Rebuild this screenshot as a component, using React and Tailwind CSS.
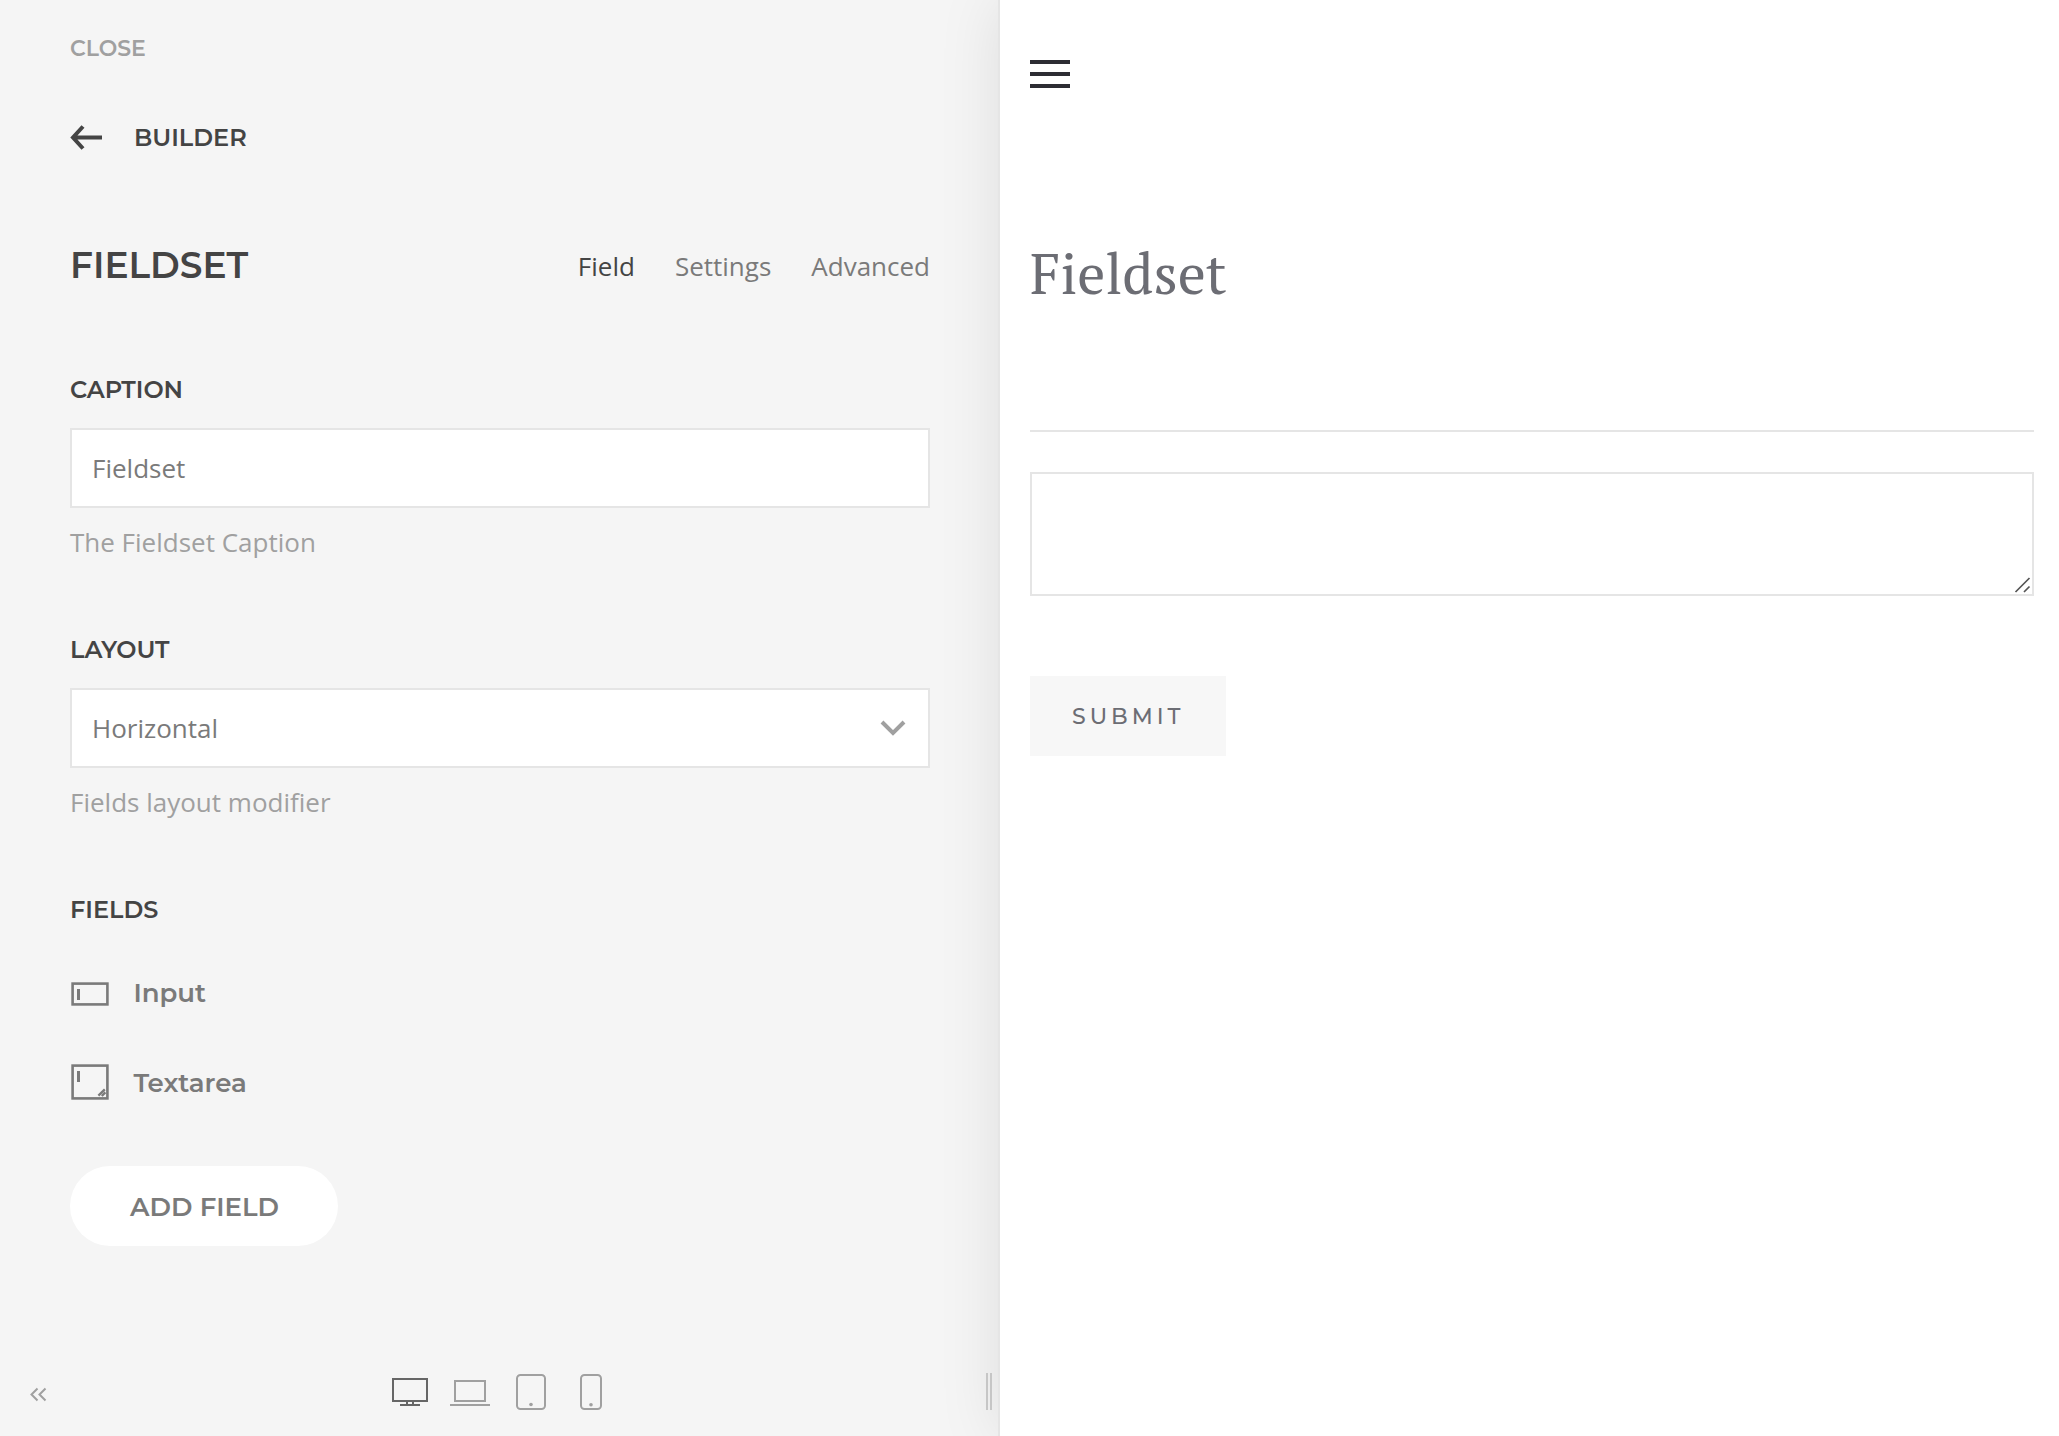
import React from "react";

const heading = "font-['Montserrat','Inter',sans-serif]";

function Label({ children }) {
  return (
    <div className="pt-px font-['Montserrat','Inter',sans-serif] text-[24px] leading-[34px] font-semibold text-[#444444]">
      {children}
    </div>
  );
}

function Hint({ children }) {
  return <p className="mt-4 text-[26px] leading-[36px] text-[#a0a0a0]">{children}</p>;
}

function InputIcon() {
  return (
    <svg width="40" height="40" viewBox="0 0 40 40" fill="none" stroke="#7a7a7a">
      <rect x="2.6" y="10.6" width="34.8" height="20.8" strokeWidth="2.6" />
      <path d="M8.5 16v11" strokeWidth="3" />
    </svg>
  );
}

function TextareaIcon() {
  return (
    <svg width="40" height="40" viewBox="0 0 40 40" fill="none" stroke="#7a7a7a">
      <rect x="2.6" y="2.6" width="34.8" height="32.8" strokeWidth="2.6" />
      <path d="M8.5 8v11" strokeWidth="3" />
      <path d="M28.4 32.6l6.4-6.2M31.8 33l3.6-3.6" strokeWidth="2.3" />
    </svg>
  );
}

function FieldRow({ icon, children }) {
  return (
    <div className="flex h-[90px] items-center gap-[23.4px]">
      {icon}
      <span className="font-['Montserrat','Inter',sans-serif] text-[26px] leading-[40px] font-semibold text-[#7a7a7a]">
        {children}
      </span>
    </div>
  );
}

function Devices() {
  return (
    <div className="flex h-9 items-end">
      <svg className="mr-[22px]" width="36" height="36" fill="none" stroke="#666666" strokeWidth="2">
        <path d="M1 5h34v22H1zM15 28v2M21 28v2M8 31h20" />
      </svg>
      <svg className="mr-[26px]" width="40" height="36" fill="none" stroke="#a0a0a0" strokeWidth="2">
        <path d="M5 7h30v20H5zM0 31h40" />
      </svg>
      <svg className="mr-[34px]" width="30" height="36" fill="none" stroke="#a0a0a0" strokeWidth="2">
        <rect x="1" y="1" width="28" height="34" rx="3.5" />
        <circle cx="15" cy="30.5" r="1.8" fill="#a0a0a0" stroke="none" />
      </svg>
      <svg width="22" height="36" fill="none" stroke="#a0a0a0" strokeWidth="2">
        <rect x="1" y="1" width="20" height="34" rx="3.5" />
        <circle cx="11" cy="30.8" r="1.8" fill="#a0a0a0" stroke="none" />
      </svg>
    </div>
  );
}

function Sidebar() {
  return (
    <aside className="flex h-full w-[1000px] shrink-0 flex-col bg-[#f5f5f5] pt-[33px]">
      <div className="flex flex-1 flex-col items-stretch px-[70px]">
        <div className={heading + " text-[22px] leading-[32px] font-semibold text-[#a0a0a0]"}>CLOSE</div>

        <div className="mt-[54px] flex h-9 items-center">
          <svg width="32" height="26" viewBox="0 0 32 26" fill="none" stroke="#444444" strokeWidth="4">
            <path d="M13 2.5L3 13.5l10 11M3 13.5h29" />
          </svg>
          <span className={heading + " ml-8 pt-0.5 text-[24px] leading-[36px] font-semibold text-[#444444]"}>
            BUILDER
          </span>
        </div>

        <div className="mt-[82px] flex h-14 items-center justify-between">
          <h1 className={heading + " text-[36px] leading-[44px] font-semibold text-[#444444]"}>FIELDSET</h1>
          <nav className="flex gap-10 pt-px text-[26px] leading-[38px] text-[#7a7a7a]">
            <span className="text-[#444444]">Field</span>
            <span>Settings</span>
            <span>Advanced</span>
          </nav>
        </div>

        <div className="mt-[79px]">
          <Label>CAPTION</Label>
          <div className="mt-[21px] flex h-20 items-center border-2 border-[#e5e5e5] bg-white px-5 text-[26px] text-[#7a7a7a]">
            Fieldset
          </div>
          <Hint>The Fieldset Caption</Hint>
        </div>

        <div className="mt-[72px]">
          <Label>LAYOUT</Label>
          <div className="mt-[21px] flex h-20 items-center justify-between border-2 border-[#e5e5e5] bg-white pr-[21px] pl-5 text-[26px] text-[#7a7a7a]">
            Horizontal
            <svg width="28" height="20" viewBox="0 0 28 20" fill="none" stroke="#a0a0a0" strokeWidth="4">
              <path d="M3 4l11 11L25 4" />
            </svg>
          </div>
          <Hint>Fields layout modifier</Hint>
        </div>

        <div className="mt-[72px]">
          <Label>FIELDS</Label>
          <div className="mt-[21px]">
            <FieldRow icon={<InputIcon />}>Input</FieldRow>
            <FieldRow icon={<TextareaIcon />}>Textarea</FieldRow>
          </div>
          <button className="mt-[38px] block h-20 w-[268px] rounded-full bg-white pt-px pl-px text-center font-['Montserrat','Inter',sans-serif] text-[26px] leading-[80px] font-semibold text-[#7a7a7a]">
            ADD FIELD
          </button>
        </div>
      </div>

      <div className="grid h-[62px] grid-cols-[1fr_auto_1fr] items-start pr-1.5">
        <svg className="mt-[13px] ml-[30px]" width="18" height="16" fill="none" stroke="#a0a0a0" strokeWidth="2">
          <path d="M7.5 1.5l-6 6 6 6M15.5 1.5l-6 6 6 6" />
        </svg>
        <Devices />
        <div className="relative z-10 -mt-px mr-0.5 flex h-[37px] w-1.5 justify-between justify-self-end">
          <i className="block w-0.5 bg-[#c6c6c6]" />
          <i className="block w-0.5 bg-[#c6c6c6]" />
        </div>
      </div>
    </aside>
  );
}

function Preview() {
  return (
    <main className="h-full flex-1 bg-white pt-[60px] pr-[25px] pl-[30px] shadow-[-2px_0_0_#e5e5e5,0_0_60px_rgba(0,0,0,0.1)]">
      <div className="flex h-7 w-10 flex-col justify-between">
        <i className="block h-1 bg-[#2d2d33]" />
        <i className="block h-1 bg-[#2d2d33]" />
        <i className="block h-1 bg-[#2d2d33]" />
      </div>
      <h2 className="mt-[150px] font-['PT_Serif','Liberation_Serif',serif] text-[56px] leading-[70px] text-[#6c6d74]">
        Fieldset
      </h2>
      <div className="mt-[122px] h-0.5 bg-[#e5e5e5]" />
      <div className="mt-10 flex h-[124px] items-end justify-end border-2 border-[#e5e5e5]">
        <svg width="18" height="18" fill="none" stroke="#555555" strokeWidth="1.7">
          <path d="M1.5 16L15.5 2M10 16l5.5-5.5" />
        </svg>
      </div>
      <button className={heading + " mt-20 block h-20 w-[196px] bg-[#f7f7f7] pt-px pl-[42px] text-left text-[22px] leading-[80px] font-medium tracking-[4px] text-[#6c6d74]"}>
        SUBMIT
      </button>
    </main>
  );
}

export default function App() {
  return (
    <div className="flex h-[1436px] w-full overflow-hidden bg-white font-['Open_Sans','Noto_Sans',sans-serif]">
      <Sidebar />
      <Preview />
    </div>
  );
}
